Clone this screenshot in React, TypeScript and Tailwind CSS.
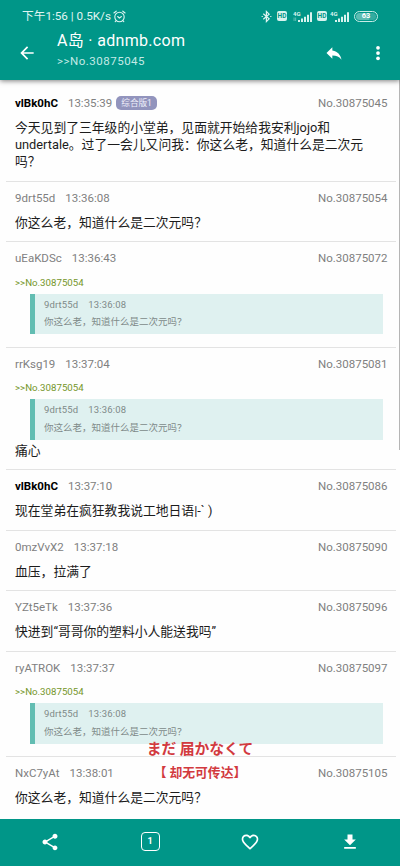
import React from "react";

type Quote = { id: string; time: string; text: string };
type Post = {
  id: string;
  time: string;
  no: string;
  op?: boolean;
  tag?: string;
  quote?: boolean;
  text?: string;
  size: string;
};

const quoted: Quote = { id: "9drt55d", time: "13:36:08", text: "你这么老，知道什么是二次元吗？" };

const posts: Post[] = [
  {
    id: "vlBk0hC",
    time: "13:35:39",
    no: "30875045",
    op: true,
    tag: "综合版1",
    text: "今天见到了三年级的小堂弟，见面就开始给我安利jojo和\nundertale。过了一会儿又问我：你这么老，知道什么是二次元\n吗？",
    size: "h-[102px] pt-[15px]",
  },
  { id: "9drt55d", time: "13:36:08", no: "30875054", text: "你这么老，知道什么是二次元吗？", size: "h-[60px] pt-[8.4px]" },
  { id: "uEaKDSc", time: "13:36:43", no: "30875072", quote: true, size: "h-[105.5px] pt-[8.4px]" },
  { id: "rrKsg19", time: "13:37:04", no: "30875081", quote: true, text: "痛心", size: "h-[122.5px] pt-[8.4px]" },
  { id: "vlBk0hC", time: "13:37:10", no: "30875086", op: true, text: "现在堂弟在疯狂教我说工地日语|-` )", size: "h-[60.5px] pt-[8.4px]" },
  { id: "0mzVvX2", time: "13:37:18", no: "30875090", text: "血压，拉满了", size: "h-[60.5px] pt-[8.4px]" },
  { id: "YZt5eTk", time: "13:37:36", no: "30875096", text: "快进到“哥哥你的塑料小人能送我吗”", size: "h-[60.5px] pt-[8.4px]" },
  { id: "ryATROK", time: "13:37:37", no: "30875097", quote: true, size: "h-[105.5px] pt-[8.4px]" },
  { id: "NxC7yAt", time: "13:38:01", no: "30875105", text: "你这么老，知道什么是二次元吗？", size: "h-[62px] pt-[8.4px]" },
];

function Signal({ arrows }: { arrows?: boolean }) {
  return (
    <svg width="20" height="13" viewBox="0 0 20 13" fill="#d9f3ef" className="shrink-0">
      <text x="0" y="5.5" fontSize="6" fontWeight="700" fontFamily="Roboto, sans-serif">4G</text>
      {arrows && <path d="M.7 7.5h.7v3.5h-.7zM2.4 7.5h.7v3.5h-.7z" opacity=".6" />}
      <path d="M5 10h2v2H5zM8 8.5h2V12H8zM11 6.8h2V12h-2zM14 4.700h2V12h-2zM17 2.200h2V12h-2z" />
    </svg>
  );
}

function HD() {
  return (
    <span className="flex h-[10px] w-[10px] items-center justify-center rounded-[2px] bg-[#d9f3ef] text-[6.5px] font-bold leading-none text-[#009688]">
      HD
    </span>
  );
}

function StatusBar() {
  return (
    <div className="flex h-8 items-center justify-between pl-[22px] pr-[22px] text-[#e0f5f2]">
      <div className="flex items-center">
        <span className="text-[11.7px] leading-4">下午1:56 | 0.5K/s</span>
        <svg width="13" height="13" viewBox="0 0 13 13" fill="none" stroke="#e0f5f2" strokeWidth="1.1" strokeLinecap="round" strokeLinejoin="round" className="ml-[2px]">
          <circle cx="6.5" cy="7" r="4.7" />
          <path d="M4.700 6.500 6.400 8.200 8.400 6.500M.9 3 3.200 1.200M12.100 3 9.800 1.200M3.200 10.700l-1 1M9.800 10.700l1 1" />
        </svg>
      </div>
      <div className="flex items-center">
        <svg width="11" height="13" viewBox="0 0 11 13" fill="none" stroke="#e0f5f2" strokeWidth="1.2">
          <path d="m2.300 3.800 5.800 5-2.700 2.700v-10L8.100 4.200l-5.800 5" />
          <path d="M.6 6h1.200v1H.6zM9.200 6h1.200v1H9.200z" fill="#e0f5f2" stroke="none" />
        </svg>
        <div className="ml-[5px] flex items-center">
          <HD />
          <div className="ml-[6px] mr-[4px] flex"><Signal arrows /></div>
          <HD />
          <div className="ml-[3px] flex"><Signal /></div>
        </div>
        <div className="ml-[4px] flex h-[11px] w-[24px] items-center justify-center rounded-full border border-[#c8ece7] p-px">
          <span className="flex h-full w-full items-center justify-center rounded-full bg-linear-to-r from-[#5dbcb2] from-65% to-[#33aba0] to-65% text-[7.5px] font-bold leading-none text-white">
            63
          </span>
        </div>
      </div>
    </div>
  );
}

function TopBar() {
  return (
    <header className="relative z-10 h-20 shrink-0 bg-[#009688] shadow-[0_1px_5px_rgba(0,0,0,0.5)]">
      <StatusBar />
      <div className="flex h-12 items-start pl-[17px] pr-[13px] text-white">
        <svg width="20" height="20" viewBox="0 0 24 24" fill="#fff" className="mt-[11px]">
          <path d="M20 11H7.8l5.600-5.600L12 4l-8 8 8 8 1.400-1.400L7.800 13H20z" />
        </svg>
        <div className="ml-[20px] flex-1">
          <div className="whitespace-nowrap text-[16px] leading-[18px] tracking-[0.32px]">A岛 · adnmb.com</div>
          <div className="mt-[3px] text-[11.5px] leading-4 tracking-[0.5px] text-[#c4eae6]">&gt;&gt;No.30875045</div>
        </div>
        <svg width="20" height="20" viewBox="0 0 24 24" fill="#fff" className="mt-[11px]">
          <path d="M10 9V5l-7 7 7 7v-4.100c5 0 8.500 1.600 11 5.100-1-5-4-10-11-11z" />
        </svg>
        <svg width="18" height="18" viewBox="0 0 24 24" fill="#fff" className="ml-[25px] mt-[12px]">
          <circle cx="12" cy="5" r="2.5" />
          <circle cx="12" cy="12" r="2.5" />
          <circle cx="12" cy="19" r="2.5" />
        </svg>
      </div>
    </header>
  );
}

function QuoteBlock({ quote }: { quote: Quote }) {
  return (
    <>
      <div className="mt-[8.6px] h-4 text-[9.7px] leading-4 text-[#75962a]">&gt;&gt;No.30875054</div>
      <div className="ml-[14.5px] mr-[4.5px] mt-[3px] h-[40.5px] border-l-[5.5px] border-[#62bdb2] bg-[#dff1f0] pl-[9.5px] pt-[3px] text-[9.5px] text-[#808a89]">
        <div className="flex h-4 gap-[10px] leading-4 tracking-[0.15px]">
          <span>{quote.id}</span>
          <span>{quote.time}</span>
        </div>
        <div className="mt-[1.5px] h-4 whitespace-nowrap leading-4">{quote.text}</div>
      </div>
    </>
  );
}

function PostItem({ post, last }: { post: Post; last: boolean }) {
  return (
    <article className={`ml-[6px] mr-[4px] shrink-0 pl-[9px] pr-[8.5px] ${post.size} ${last ? "" : "border-b border-[#e3e3e3]"}`}>
      <div className="flex h-4 items-center whitespace-nowrap text-[11.5px] leading-4 text-[#808080]">
        <span className={post.op ? "font-bold text-black" : ""}>{post.id}</span>
        <span className="ml-[10px]">{post.time}</span>
        {post.tag && (
          <span className="ml-[4px] flex h-[13.5px] items-center rounded-[5px] bg-[#9294bd] px-[5px] text-[8.6px] leading-none text-[#eeeefa]">
            {post.tag}
          </span>
        )}
        <span className="ml-auto">No.{post.no}</span>
      </div>
      {post.quote && <QuoteBlock quote={quoted} />}
      {post.text && (
        <p className={`whitespace-pre text-[12.8px] leading-[17.3px] text-[#1c1c1c] ${post.quote ? "mt-[2px]" : "mt-[7.7px]"}`}>
          {post.text}
        </p>
      )}
    </article>
  );
}

function BottomBar() {
  return (
    <nav className="grid h-[47px] shrink-0 grid-cols-4 items-center justify-items-center bg-[#009688]">
      <svg width="20" height="20" viewBox="0 0 24 24" fill="#fff" className="-translate-y-px">
        <path d="M18 16.080c-.76 0-1.440.3-1.960.77L8.910 12.700c.05-.23.09-.46.09-.7s-.04-.47-.09-.7l7.050-4.110c.54.5 1.250.81 2.040.81 1.660 0 3-1.340 3-3s-1.340-3-3-3-3 1.340-3 3c0 .24.04.47.09.7L8.040 9.810C7.500 9.310 6.790 9 6 9c-1.660 0-3 1.340-3 3s1.340 3 3 3c.79 0 1.500-.31 2.040-.81l7.120 4.160c-.05.21-.08.43-.08.65 0 1.610 1.310 2.920 2.920 2.920s2.920-1.310 2.920-2.920-1.310-2.920-2.920-2.920z" />
      </svg>
      <div className="flex h-[19px] w-[19px] -translate-y-px items-center justify-center rounded-[4px] border-[1.5px] border-white text-[9px] font-bold leading-none text-white">1</div>
      <svg width="20" height="20" viewBox="0 0 24 24" fill="#fff" className="-translate-y-px">
        <path d="M16.500 3c-1.740 0-3.410.81-4.500 2.090C10.910 3.810 9.240 3 7.500 3 4.420 3 2 5.420 2 8.500c0 3.780 3.400 6.860 8.550 11.540L12 21.350l1.450-1.320C18.600 15.360 22 12.280 22 8.500 22 5.420 19.580 3 16.500 3zm-4.400 15.550-.1.1-.1-.1C7.140 14.240 4 11.390 4 8.500 4 6.500 5.500 5 7.500 5c1.540 0 3.040.99 3.570 2.360h1.870C13.460 5.990 14.960 5 16.500 5c2 0 3.500 1.500 3.500 3.500 0 2.890-3.140 5.740-7.900 10.050z" />
      </svg>
      <svg width="20" height="20" viewBox="0 0 24 24" fill="#fff" className="-translate-y-px">
        <path d="M19 9h-4V3H9v6H5l7 7 7-7zM5 18v2h14v-2H5z" />
      </svg>
    </nav>
  );
}

export default function App() {
  return (
    <div className="relative flex h-[866px] w-[400px] flex-col overflow-hidden bg-[#fefefe] font-['Roboto','Noto_Sans_CJK_SC',sans-serif]">
      <TopBar />
      <main className="flex h-[739px] flex-col overflow-hidden">
        {posts.map((post, i) => (
          <PostItem key={post.no} post={post} last={i === posts.length - 1} />
        ))}
      </main>
      <BottomBar />
      <div className="absolute right-0 top-20 h-[370px] w-[1.5px] bg-[#b5b5b5]" />
      <div className="absolute left-0 top-[738px] w-full text-center font-bold text-[#d23a3f]">
        <div className="font-['Noto_Sans_CJK_JP',sans-serif] text-[14.8px] leading-5">まだ 届かなくて</div>
        <div className="mt-[4px] font-['Noto_Sans_CJK_SC',sans-serif] text-[12.8px] leading-5">【 却无可传达】</div>
      </div>
    </div>
  );
}
